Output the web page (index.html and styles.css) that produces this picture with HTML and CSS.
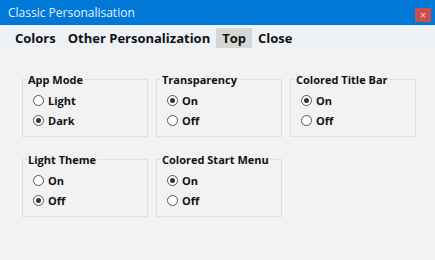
FILE: index.html
```html
<!DOCTYPE html>
<html lang="en">
<head>
  <meta charset="UTF-8" />
  <title>Classic Personalisation</title>
  <link rel="stylesheet" href="styles.css">
</head>
<body>

<!-- Window title -->
<div class="title-bar">
  <span class="title">Classic Personalisation</span>
  <span class="close-btn">&times;</span>
</div>

<!-- Menu -->
<div class="menu-bar">
  <span class="menu-item">Colors</span>
  <span class="menu-item">Other Personalization</span>
  <span class="menu-item active">Top</span>
  <span class="menu-item">Close</span>
</div>

<div class="content">
  <fieldset class="group">
    <legend>App Mode</legend>
    <div class="option"><span class="radio"></span>Light</div>
    <div class="option"><span class="radio checked"></span>Dark</div>
  </fieldset>

  <fieldset class="group">
    <legend>Transparency</legend>
    <div class="option"><span class="radio checked"></span>On</div>
    <div class="option"><span class="radio"></span>Off</div>
  </fieldset>

  <fieldset class="group">
    <legend>Colored Title Bar</legend>
    <div class="option"><span class="radio checked"></span>On</div>
    <div class="option"><span class="radio"></span>Off</div>
  </fieldset>

  <fieldset class="group">
    <legend>Light Theme</legend>
    <div class="option"><span class="radio"></span>On</div>
    <div class="option"><span class="radio checked"></span>Off</div>
  </fieldset>

  <fieldset class="group">
    <legend>Colored Start Menu</legend>
    <div class="option"><span class="radio checked"></span>On</div>
    <div class="option"><span class="radio"></span>Off</div>
  </fieldset>
</div>

</body>
</html>
```

FILE: styles.css
```css
* {
  box-sizing: border-box;
}
body {
  margin: 0;
  width: 435px;
  height: 260px;
  background: #f2f2f2;
  font-family: 'Open Sans', 'Noto Sans', sans-serif;
  color: #111;
  overflow: hidden;
}

.title-bar {
  height: 25px;
  background: #0078d7;
  display: flex;
  align-items: center;
  justify-content: space-between;
  padding: 0 4px 0 8px;
}
.title {
  color: #e8f1fb;
  font-size: 12px;
}
.close-btn {
  width: 16px;
  height: 14px;
  margin-top: 5px;
  background: #c94f4f;
  color: #f3d5d5;
  font-size: 10px;
  line-height: 14px;
  text-align: center;
}

.menu-bar {
  height: 25px;
  background: #eef1f5;
  display: flex;
  align-items: center;
  padding-left: 9px;
}
.menu-item {
  font-size: 13px;
  font-weight: bold;
  padding: 2px 6px;
  line-height: 16px;
}
.menu-item.active {
  background: #d6d6d6;
}

.content {
  display: grid;
  grid-template-columns: repeat(3, 126px);
  column-gap: 8px;
  row-gap: 15px;
  padding: 22px 0 0 22px;
}
.group {
  margin: 0;
  border: 1px solid #e0e0e0;
  padding: 3px 10px 7px;
  height: 65px;
}
.group legend {
  font-size: 11px;
  font-weight: bold;
  padding: 0 1px;
  margin-left: -6px;
}
.option {
  display: flex;
  align-items: center;
  height: 20px;
  font-size: 11px;
  font-weight: bold;
}
.radio {
  width: 11px;
  height: 11px;
  border: 1px solid #555;
  border-radius: 50%;
  background: #fff;
  margin-right: 4px;
  position: relative;
}
.radio.checked::after {
  content: '';
  position: absolute;
  left: 2px;
  top: 2px;
  width: 5px;
  height: 5px;
  border-radius: 50%;
  background: #333;
}
```
